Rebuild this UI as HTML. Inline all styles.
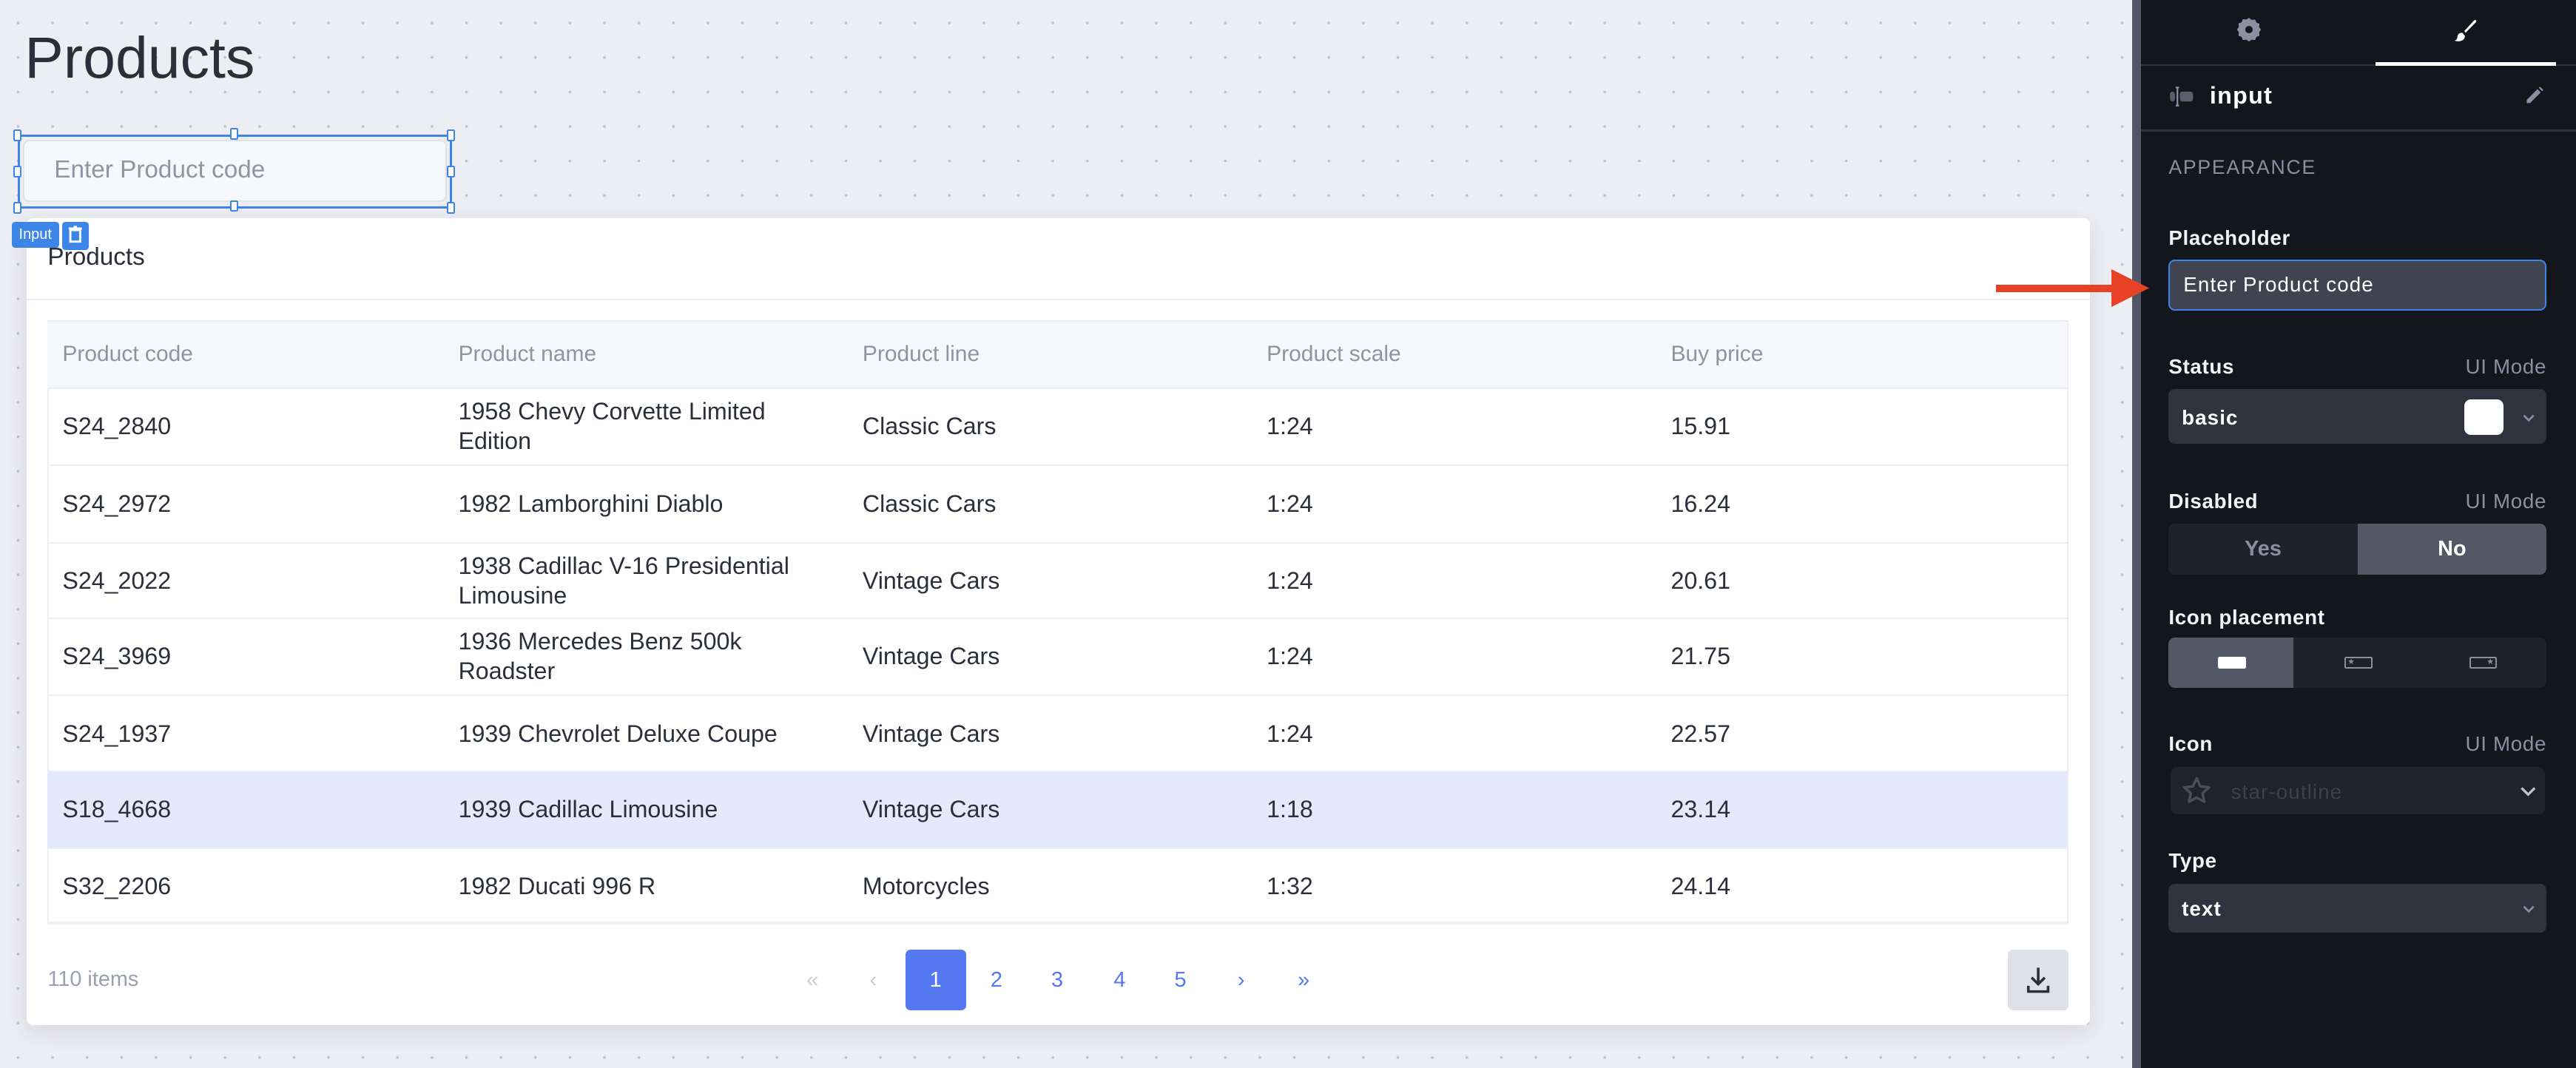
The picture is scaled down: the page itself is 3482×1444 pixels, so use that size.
<!DOCTYPE html>
<html><head><meta charset="utf-8"><style>
*{box-sizing:border-box;margin:0;padding:0}
html,body{width:3482px;height:1444px;overflow:hidden;background:#edeef3}
#w{zoom:2.2207;width:1568px;height:650.3px;position:relative;font-family:"Liberation Sans",sans-serif;overflow:hidden}
.a{position:absolute;white-space:nowrap}
#canvas{position:absolute;left:0;top:0;width:1298px;height:651px;background-color:#edeef3;background-image:radial-gradient(circle,#bfc2cb 0.7px,transparent 1px);background-size:21px 21px;background-position:0.5px 3.5px}
.h{position:absolute;width:5px;height:7px;background:#fff;border:1px solid #3d86e8;border-radius:1px}
.th{position:absolute;top:196px;height:40px;line-height:40px;font-size:13.5px;color:#8f94a3}
.row{position:absolute;left:29px;width:1229px;height:47px;border-top:1px solid #eceef3}
.row span{position:absolute;font-size:14.5px;color:#2b2f3a;line-height:18px;top:50%;transform:translateY(-50%)}
.pg{position:absolute;top:578px;height:37px;width:37px;line-height:37px;text-align:center;font-size:13px;color:#5578f0}
#panel{position:absolute;left:1303px;top:0;width:265px;height:651px;background:#14161e;color:#fff}
.lbl{position:absolute;left:17px;font-size:12.5px;font-weight:bold;color:#f2f3f5;letter-spacing:.3px}
.uim{position:absolute;right:18px;font-size:12.5px;color:#8a90a0;letter-spacing:.3px}
.box{position:absolute;left:17px;width:230px;border-radius:4px}
</style></head><body><div id="w">
<div id="canvas"></div>
<div class="a" style="left:15px;top:15px;font-size:35.5px;color:#2b2f3a">Products</div>

<div class="a" style="left:14px;top:85px;width:258px;height:38px;background:#f7f8fc;border:1px solid #e0e2e8;border-radius:4px"></div>
<div class="a" style="left:33px;top:95px;font-size:15px;color:#9095a3">Enter Product code</div>
<div class="a" style="left:11px;top:82px;width:264px;height:45px;border:1.5px solid #3d86e8"></div>
<div class="h" style="left:8px;top:79px"></div><div class="h" style="left:140px;top:78px"></div><div class="h" style="left:272px;top:79px"></div>
<div class="h" style="left:8px;top:101px"></div><div class="h" style="left:272px;top:101px"></div>
<div class="h" style="left:8px;top:123px"></div><div class="h" style="left:140px;top:122px"></div><div class="h" style="left:272px;top:123px"></div>

<div class="a" style="left:16px;top:133px;width:1256px;height:491px;background:#fff;border-radius:4px;box-shadow:0 4px 14px rgba(40,45,70,.12)"></div>
<div class="a" style="left:7px;top:135px;width:29px;height:16px;background:#3d86e8;border-radius:2px;color:#fff;font-size:9px;line-height:16px;text-align:center">Input</div>
<div class="a" style="left:38px;top:135px;width:16px;height:17px;background:#3d86e8;border-radius:2px"><svg width="16" height="17" viewBox="0 0 16 17"><path d="M5 5h6v7H5zM4 4h8M7 3h2" stroke="#fff" stroke-width="1.3" fill="none"/><path d="M7 6.5v4M9 6.5v4" stroke="#3d86e8" stroke-width=".8"/></svg></div>
<div class="a" style="left:29px;top:148px;font-size:15px;color:#2b2f3a">Products</div>
<div class="a" style="left:16px;top:182px;width:1256px;height:1px;background:#eceef3"></div>

<div class="a" style="left:29px;top:195px;width:1230px;height:368px;border:1px solid #eceef3"></div>
<div class="a" style="left:29px;top:196px;width:1229px;height:40px;background:#f7f8fc"></div>
<div class="th" style="left:38px">Product code</div><div class="th" style="left:279px">Product name</div><div class="th" style="left:525px">Product line</div><div class="th" style="left:771px">Product scale</div><div class="th" style="left:1017px">Buy price</div>

<div class="row" style="top:236px"><span style="left:9px">S24_2840</span><span style="left:250px">1958 Chevy Corvette Limited<br>Edition</span><span style="left:496px">Classic Cars</span><span style="left:742px">1:24</span><span style="left:988px">15.91</span></div>
<div class="row" style="top:283px"><span style="left:9px">S24_2972</span><span style="left:250px">1982 Lamborghini Diablo</span><span style="left:496px">Classic Cars</span><span style="left:742px">1:24</span><span style="left:988px">16.24</span></div>
<div class="row" style="top:330px"><span style="left:9px">S24_2022</span><span style="left:250px">1938 Cadillac V-16 Presidential<br>Limousine</span><span style="left:496px">Vintage Cars</span><span style="left:742px">1:24</span><span style="left:988px">20.61</span></div>
<div class="row" style="top:376px"><span style="left:9px">S24_3969</span><span style="left:250px">1936 Mercedes Benz 500k<br>Roadster</span><span style="left:496px">Vintage Cars</span><span style="left:742px">1:24</span><span style="left:988px">21.75</span></div>
<div class="row" style="top:423px"><span style="left:9px">S24_1937</span><span style="left:250px">1939 Chevrolet Deluxe Coupe</span><span style="left:496px">Vintage Cars</span><span style="left:742px">1:24</span><span style="left:988px">22.57</span></div>
<div class="row" style="top:469px;background:#e4e9fb"><span style="left:9px">S18_4668</span><span style="left:250px">1939 Cadillac Limousine</span><span style="left:496px">Vintage Cars</span><span style="left:742px">1:18</span><span style="left:988px">23.14</span></div>
<div class="row" style="top:516px"><span style="left:9px">S32_2206</span><span style="left:250px">1982 Ducati 996 R</span><span style="left:496px">Motorcycles</span><span style="left:742px">1:32</span><span style="left:988px">24.14</span></div>
<div class="a" style="left:29px;top:561px;width:1230px;height:2px;background:#eceef3"></div>

<div class="a" style="left:29px;top:589px;font-size:13px;color:#9aa0ad">110 items</div>
<div class="pg" style="left:476px;color:#c8cbd3">«</div><div class="pg" style="left:513px;color:#c8cbd3">‹</div>
<div class="pg" style="left:551px;background:#5578f0;color:#fff;border-radius:3px">1</div>
<div class="pg" style="left:588px">2</div><div class="pg" style="left:625px">3</div><div class="pg" style="left:663px">4</div><div class="pg" style="left:700px">5</div><div class="pg" style="left:737px">›</div><div class="pg" style="left:775px">»</div>
<div class="a" style="left:1222px;top:578px;width:37px;height:37px;background:#dfe1e8;border-radius:3px"><svg width="37" height="37" viewBox="0 0 37 37"><path d="M18.5 11v10M14.5 17l4 4 4-4M12.5 22v3.5h12V22" stroke="#2b2f3a" stroke-width="1.6" fill="none"/></svg></div>

<div class="a" style="left:1298px;top:0;width:5px;height:651px;background:#525664"></div>
<div id="panel">
 <svg class="a" style="left:57px;top:9px" width="18" height="18" viewBox="0 0 24 24"><path fill="#8a90a0" d="M12 2.5l2.2 1.6 2.7-.3 1.1 2.5 2.5 1.1-.3 2.7L21.8 12l-1.6 2.2.3 2.7-2.5 1.1-1.1 2.5-2.7-.3L12 21.8l-2.2-1.6-2.7.3-1.1-2.5-2.5-1.1.3-2.7L2.2 12l1.6-2.2-.3-2.7 2.5-1.1 1.1-2.5 2.7.3z"/><circle cx="12" cy="12" r="3" fill="#14161e"/></svg>
 <svg class="a" style="left:188px;top:10px" width="18" height="18" viewBox="0 0 18 18"><path d="M9 9l6-6.5c.8-.7 1.8.3 1.1 1.1L9.8 10z" fill="#fff"/><path d="M7.8 10c-2 0-3 1.2-3 2.6 0 1.2-.8 2-1.8 2.2 2.5 1 6.3.4 6.4-2.8z" fill="#fff"/></svg>
 <div class="a" style="left:0;top:39px;width:265px;height:1px;background:#2c303a"></div>
 <div class="a" style="left:143px;top:38px;width:110px;height:2px;background:#fff"></div>
 <svg class="a" style="left:17px;top:52px" width="16" height="14" viewBox="0 0 16 14"><rect x="1" y="4" width="3" height="6" rx="1.5" fill="#5a5f6c"/><rect x="7" y="4" width="8" height="6" rx="1.5" fill="#5a5f6c"/><path d="M5.5 1.5v11M4.5 1.5h2M4.5 12.5h2" stroke="#8a90a0" stroke-width="1"/></svg>
 <div class="a" style="left:42px;top:50px;font-size:14.5px;font-weight:bold;letter-spacing:.6px">input</div>
 <svg class="a" style="left:233px;top:52px" width="13" height="13" viewBox="0 0 13 13"><path d="M2 9l6.5-6.5 2 2L4 11H2z" fill="#8a90a0"/><path d="M9.3 1.7l.8-.7 2 2-.7.8z" fill="#8a90a0"/></svg>
 <div class="a" style="left:0;top:79px;width:265px;height:1px;background:#2c303a"></div>
 <div class="a" style="left:17px;top:95px;font-size:12px;color:#8a90a0;letter-spacing:.8px">APPEARANCE</div>

 <div class="lbl" style="top:138px">Placeholder</div>
 <div class="box" style="top:158px;height:31px;background:#3f4450;border:1px solid #3d86e8"></div>
 <div class="a" style="left:26px;top:166px;font-size:12.5px;letter-spacing:.5px">Enter Product code</div>

 <div class="lbl" style="top:216px">Status</div><div class="uim" style="top:216px">UI Mode</div>
 <div class="box" style="top:237px;height:33px;background:#30333e"></div>
 <div class="a" style="left:25px;top:247px;font-size:12.5px;font-weight:bold;letter-spacing:.5px">basic</div>
 <div class="a" style="left:197px;top:243px;width:24px;height:22px;background:#fff;border-radius:4px"></div>
 <svg class="a" style="left:231px;top:250px" width="10" height="8" viewBox="0 0 10 8"><path d="M2 3l3 3 3-3" stroke="#8a90a0" stroke-width="1.2" fill="none"/></svg>

 <div class="lbl" style="top:298px">Disabled</div><div class="uim" style="top:298px">UI Mode</div>
 <div class="box" style="top:319px;height:31px;background:#1f222b;overflow:hidden"><div class="a" style="left:115px;top:0;width:115px;height:31px;background:#525866"></div></div>
 <div class="a" style="left:17px;top:327px;width:115px;text-align:center;font-size:13px;color:#8a90a0;font-weight:bold">Yes</div>
 <div class="a" style="left:132px;top:327px;width:115px;text-align:center;font-size:13px;font-weight:bold">No</div>

 <div class="lbl" style="top:369px">Icon placement</div>
 <div class="box" style="top:388px;height:31px;background:#1f222b;overflow:hidden"><div class="a" style="left:0;top:0;width:76px;height:31px;background:#525866"></div></div>
 <div class="a" style="left:47px;top:400px;width:17px;height:7px;background:#fff;border-radius:1px"></div>
 <div class="a" style="left:124px;top:400px;width:17px;height:7px;border:1px solid #8a90a0;border-radius:1px;font-size:5px;color:#8a90a0;line-height:5px;padding-left:1px">★</div>
 <div class="a" style="left:200px;top:400px;width:17px;height:7px;border:1px solid #8a90a0;border-radius:1px;font-size:5px;color:#8a90a0;line-height:5px;text-align:right;padding-right:1px">★</div>

 <div class="lbl" style="top:446px">Icon</div><div class="uim" style="top:446px">UI Mode</div>
 <div class="box" style="top:467px;height:29px;left:18px;width:228px;background:#20232c"></div>
 <svg class="a" style="left:24px;top:472px" width="20" height="19" viewBox="0 0 24 24"><path d="M12 2.5l2.9 6.2 6.6.7-5 4.5 1.4 6.6L12 17.2l-5.9 3.3 1.4-6.6-5-4.5 6.6-.7z" stroke="#4a4e5a" stroke-width="2" fill="none" stroke-linejoin="round"/></svg>
 <div class="a" style="left:55px;top:475px;font-size:12.5px;color:#3d414c;letter-spacing:.5px">star-outline</div>
 <svg class="a" style="left:230px;top:478px" width="12" height="8" viewBox="0 0 12 8"><path d="M2 2l4 4 4-4" stroke="#c0c4cc" stroke-width="1.5" fill="none"/></svg>

 <div class="lbl" style="top:517px">Type</div>
 <div class="box" style="top:538px;height:30px;background:#30333e"></div>
 <div class="a" style="left:25px;top:546px;font-size:12.5px;font-weight:bold;letter-spacing:.5px">text</div>
 <svg class="a" style="left:231px;top:549px" width="10" height="8" viewBox="0 0 10 8"><path d="M2 3l3 3 3-3" stroke="#8a90a0" stroke-width="1.2" fill="none"/></svg>
</div>

<div class="a" style="left:1215px;top:173.5px;width:72px;height:4.5px;background:#e84226"></div>
<svg class="a" style="left:1285px;top:164px" width="24" height="23" viewBox="0 0 24 23"><path d="M0 0L23 11.5 0 23z" fill="#e84226"/></svg>
</div></body></html>
